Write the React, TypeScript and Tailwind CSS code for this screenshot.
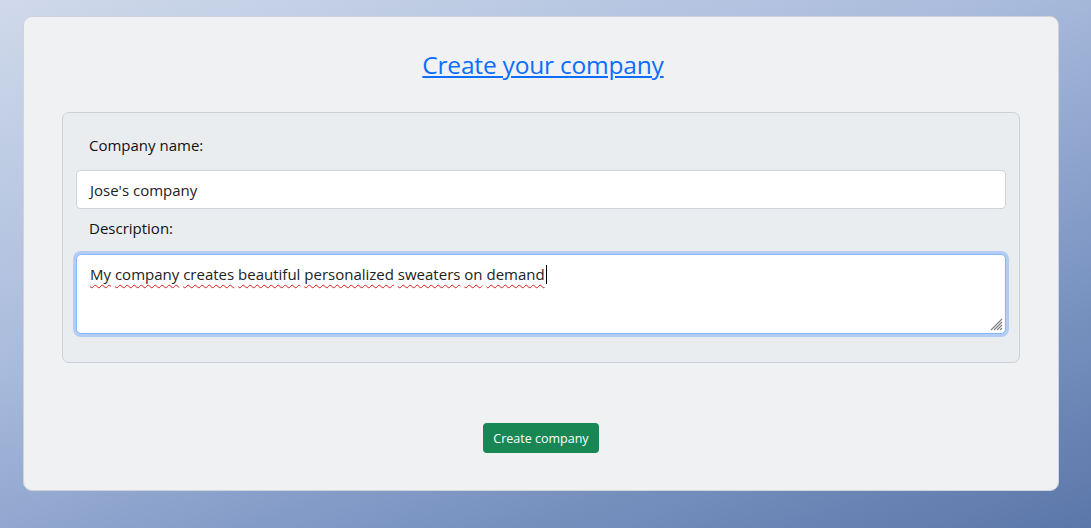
import React from "react";

const font = { fontFamily: '"Open Sans", "Noto Sans", Arial, sans-serif' };

function Wavy({ children }: { children: React.ReactNode }) {
  return (
    <span className="underline decoration-wavy decoration-[#e01b1b] decoration-[1.3px] underline-offset-[4px]">
      {children}
    </span>
  );
}

export default function App() {
  return (
    <div
      className="w-[1091px] h-[528px] overflow-hidden bg-[linear-gradient(160deg,#cfd9ea_0%,#a9bbdc_40%,#7f98c5_70%,#5b77a9_100%)] pt-[16px] pl-[23px]"
      style={font}
    >
      <div className="w-[1036px] h-[475px] rounded-[9px] border border-[#d0d4da] bg-[#eff1f3] px-[38px] pt-[31px] flex flex-col">
        <div className="flex justify-center">
          <a href="#" className="text-[#0d6efd] underline text-[24.5px] leading-[34px] tracking-[-0.2px] ml-[4px]">
            Create your company
          </a>
        </div>
        <div className="mt-[30px] h-[251px] rounded-[7px] border border-[#cdd1d6] bg-[#eaedf0] px-[13px] pt-[21px]">
          <div className="px-[13px] text-[15px] leading-[22px] text-[#111]">Company name:</div>
          <div className="mt-[14px] h-[39px] rounded-[4px] border border-[#cfd4da] bg-white px-[13px] pt-[1px] flex items-center text-[15px] text-[#222]">
            Jose's company
          </div>
          <div className="mt-[8px] px-[13px] text-[15px] leading-[22px] text-[#111]">Description:</div>
          <div className="relative mt-[15px] h-[80px] rounded-[5px] border border-[#86b7fe] bg-white px-[13px] pt-[8px] text-[15px] leading-[22px] text-[#222] shadow-[0_0_0_3px_rgba(13,110,253,0.25)]">
            <Wavy>My</Wavy> <Wavy>company</Wavy> <Wavy>creates</Wavy> <Wavy>beautiful</Wavy>{" "}
            <Wavy>personalized</Wavy> <Wavy>sweaters</Wavy> <Wavy>on</Wavy> <Wavy>demand</Wavy>
            <span className="inline-block w-px h-[19px] bg-black align-[-4px] ml-[1px]" />
            <svg className="absolute right-[2px] bottom-[2px]" width="14" height="14" viewBox="0 0 14 14">
              <path d="M13 2 L2 13 M13 5 L5 13 M13 8 L8 13 M13 11 L11 13" stroke="#808080" strokeWidth="1.1" />
            </svg>
          </div>
        </div>
        <div className="mt-[60px] flex justify-center">
          <button className="h-[30px] rounded-[4px] bg-[#198754] px-[10px] pt-[3px] text-[12.5px] text-white">
            Create company
          </button>
        </div>
      </div>
    </div>
  );
}
